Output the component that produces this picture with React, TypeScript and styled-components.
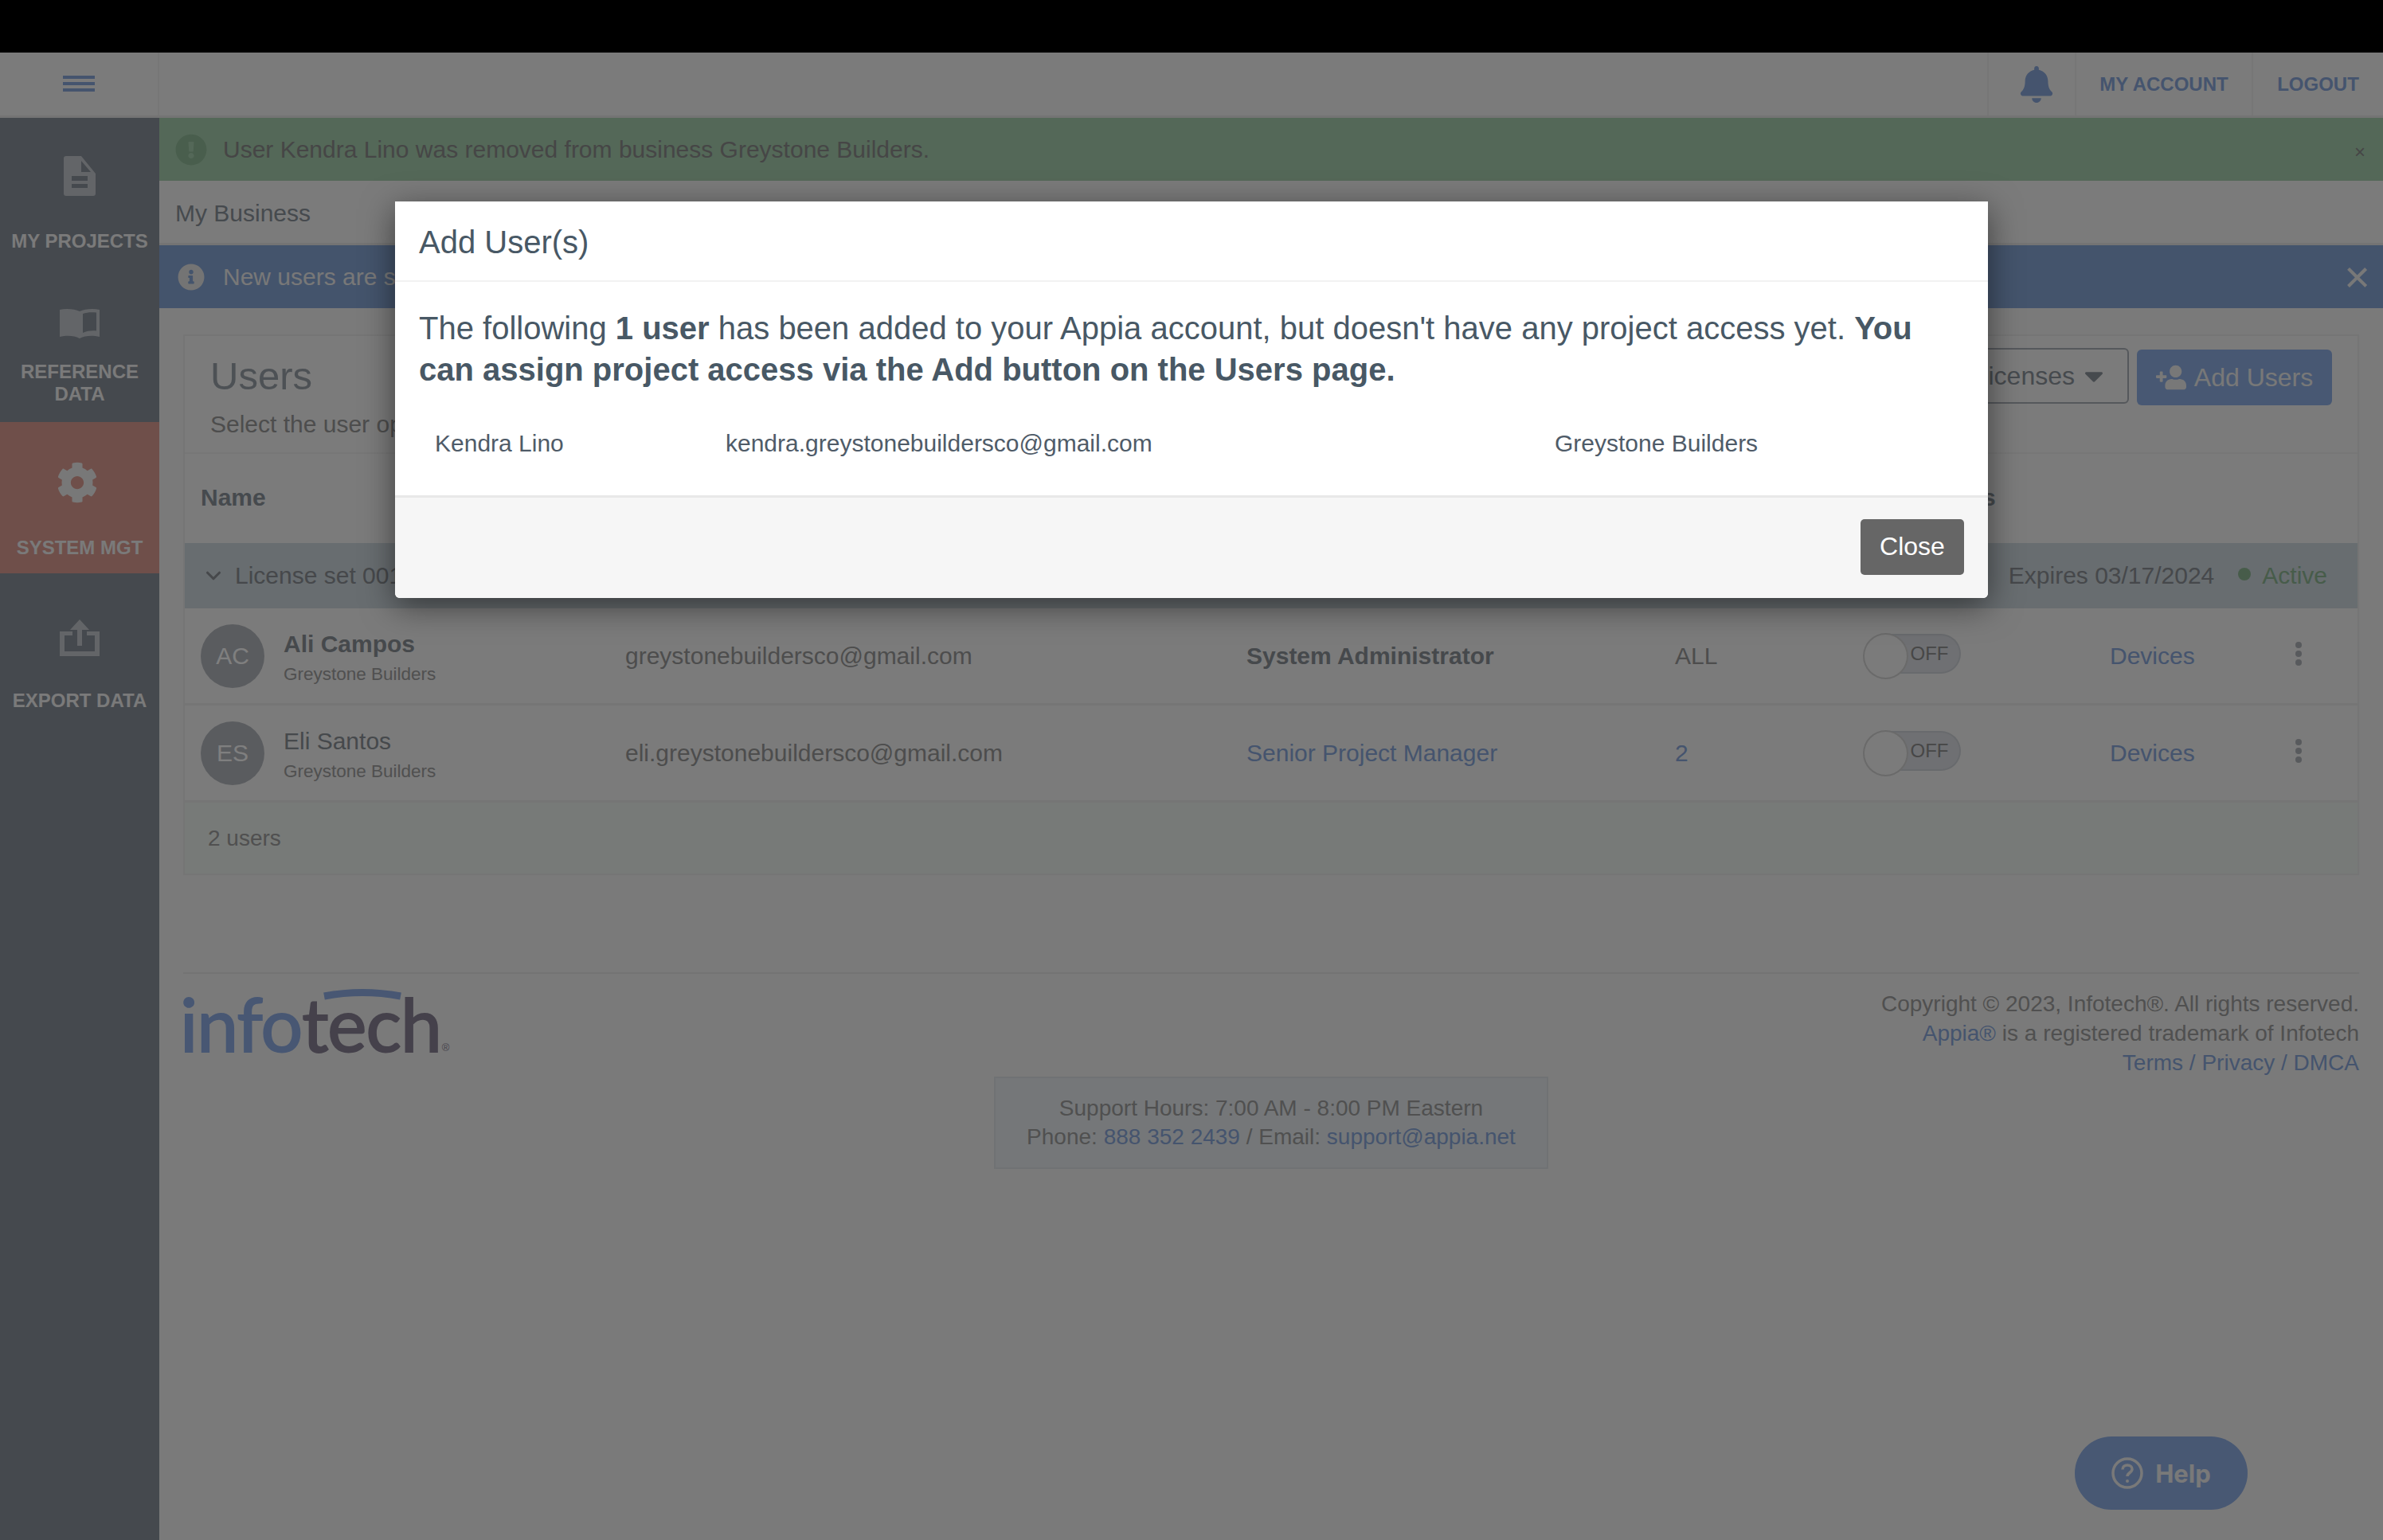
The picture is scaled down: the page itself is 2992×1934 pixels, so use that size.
import React from "react"
import styled, { createGlobalStyle } from "styled-components"
import { FaBell, FaCaretDown, FaCog, FaExclamationCircle, FaInfoCircle, FaUserPlus } from "react-icons/fa"
import { ChevronDown } from "lucide-react"

const GlobalStyle = createGlobalStyle`
	html, body {
		margin: 0;
		padding: 0;
		width: 2992px;
		height: 1934px;
		overflow: hidden;
		background: #f5f5f5;
		font-family: "Liberation Sans", Arial, sans-serif;
	}
	* {
		box-sizing: border-box;
	}
`

const Page = styled.div`
	position: relative;
	width: 2992px;
	height: 1934px;
	display: flex;
	flex-direction: column;
	color: #8c949c;
`

const TopBar = styled.div`
	height: 66px;
	background: #000;
	flex: none;
`

const Header = styled.header`
	height: 82px;
	flex: none;
	display: flex;
	align-items: stretch;
	background: #f6f6f6;
	border-bottom: 3px solid #e8e8e8;
`

const BurgerCell = styled.div`
	width: 200px;
	display: flex;
	align-items: center;
	justify-content: center;
	border-right: 2px solid #ececec;
`

const Burger = styled.div`
	width: 40px;
	height: 20px;
	display: flex;
	flex-direction: column;
	justify-content: space-between;
	margin-top: -2px;

	span {
		height: 4px;
		background: #8aa9dc;
	}
`

const HeaderSpacer = styled.div`
	flex: 1;
`

const HeaderCell = styled.div<{ $width: number; $inset?: number }>`
	width: ${(p) => p.$width}px;
	padding-left: ${(p) => p.$inset ?? 0}px;
	display: flex;
	align-items: center;
	justify-content: center;
	border-left: 2px solid #ececec;
	color: #8aa9dc;
	font-size: 24px;
	font-weight: 700;
`

const Main = styled.div`
	flex: 1;
	display: flex;
	min-height: 0;
`

const Sidebar = styled.nav`
	width: 200px;
	flex: none;
	background: #8b929c;
	display: flex;
	flex-direction: column;
`

const SideItem = styled.div<{ $active?: boolean; $top: number; $gap: number }>`
	height: ${(p) => (p.$active ? 190 : 191)}px;
	padding-top: ${(p) => p.$top}px;
	display: flex;
	flex-direction: column;
	align-items: center;
	background: ${(p) => (p.$active ? "#de9f94" : "transparent")};
	color: #f4f4f4;
	font-size: 24px;
	font-weight: 700;
	line-height: 28px;
	text-align: center;

	svg {
		display: block;
		margin-bottom: ${(p) => p.$gap}px;
	}
`

const Content = styled.main`
	flex: 1;
	min-width: 0;
	display: flex;
	flex-direction: column;
`

const Banner = styled.div<{ $bg: string; $fg: string }>`
	height: 79px;
	flex: none;
	display: flex;
	align-items: center;
	background: ${(p) => p.$bg};
	color: ${(p) => p.$fg};
	font-size: 30px;
`

const BannerIcon = styled.div<{ $color: string; $size: number; $inset: number }>`
	width: 80px;
	padding-left: ${(p) => p.$inset}px;
	display: flex;
	flex: none;
	color: ${(p) => p.$color};
	font-size: ${(p) => p.$size}px;
`

const BannerText = styled.div`
	flex: 1;
`

const BannerClose = styled.div<{ $size: number; $right: number; $top?: number }>`
	font-size: ${(p) => p.$size}px;
	margin-right: ${(p) => p.$right}px;
	margin-top: ${(p) => p.$top ?? 0}px;
	line-height: 1;
`

const Crumb = styled.div`
	height: 81px;
	flex: none;
	padding: 3px 0 0 20px;
	display: flex;
	align-items: center;
	font-size: 30px;
	background: #f6f6f6;
	border-bottom: 3px solid #e8e8e8;
`

const Card = styled.section`
	margin: 33px 30px 0 30px;
	flex: none;
	border: 2px solid #eaeaea;
	background: #f6f6f6;
`

const CardHead = styled.div`
	height: 148px;
	padding: 24px 32px 0 32px;
	display: flex;
	justify-content: space-between;
	border-bottom: 2px solid #eeeeee;
`

const Title = styled.h2`
	margin: 0 0 18px;
	font-size: 49px;
	line-height: 52px;
	font-weight: 400;
	color: #9aa2aa;
`

const Hint = styled.div`
	width: 270px;
	overflow: hidden;
	white-space: nowrap;
	font-size: 30px;
	color: #9a9a9a;
`

const CardActions = styled.div`
	display: flex;
	gap: 10px;
	align-items: flex-start;
	margin-top: -7px;
`

const OutlineButton = styled.div`
	height: 70px;
	padding: 0 23px 0 30px;
	display: flex;
	align-items: center;
	gap: 5px;
	border: 2px solid #aab0b8;
	border-radius: 6px;
	font-size: 32px;
	margin-top: -2px;
`

const PrimaryButton = styled.div`
	width: 245px;
	height: 70px;
	display: flex;
	align-items: center;
	justify-content: center;
	gap: 10px;
	background: #90b0e6;
	border-radius: 6px;
	color: #f0f0f0;
	font-size: 32px;

	svg {
		transform: scaleX(-1);
	}
`

const Columns = styled.div`
	display: grid;
	grid-template-columns: 533px 780px 538px 238px 308px 237px 1fr;
	padding-left: 20px;
	align-items: center;
`

const HeadRow = styled(Columns)`
	height: 112px;
	font-size: 30px;
	font-weight: 700;
	color: #8c949c;
	padding-bottom: 2px;
`

const NudgedHead = styled.div`
	margin-left: -17px;
	white-space: nowrap;
`

const LicenseRow = styled.div`
	height: 82px;
	display: flex;
	align-items: center;
	padding: 0 38px 0 21px;
	background: #d0dae0;
	font-size: 30px;
	color: #8c9196;
`

const LicenseName = styled.div`
	flex: 1;
	display: flex;
	align-items: center;
	gap: 12px;
`

const Expires = styled.div`
	margin-right: 30px;
`

const ActiveTag = styled.div`
	display: flex;
	align-items: center;
	gap: 14px;
	color: #8fb894;
`

const Dot = styled.span`
	width: 16px;
	height: 16px;
	border-radius: 50%;
	background: #8fb894;
	margin-top: -4px;
`

const UserRow = styled(Columns)`
	height: 122px;
	border-bottom: 3px solid #eaeaea;
	font-size: 30px;
	color: #9a9a9a;
`

const NameCell = styled.div`
	display: flex;
	align-items: center;
	gap: 24px;
`

const Avatar = styled.div`
	width: 80px;
	height: 80px;
	border-radius: 50%;
	background: #b4b8be;
	color: #fff;
	display: flex;
	align-items: center;
	justify-content: center;
	font-size: 30px;
`

const UserInfo = styled.div`
	padding-top: 7px;
`

const UserName = styled.div<{ $bold?: boolean }>`
	font-size: 30px;
	line-height: 36px;
	font-weight: ${(p) => (p.$bold ? 700 : 400)};
	color: #8c9298;
`

const UserBiz = styled.div`
	font-size: 22.5px;
	line-height: 34px;
	margin-top: 3px;
	color: #a0a0a0;
`

const Role = styled.div<{ $link?: boolean }>`
	font-weight: ${(p) => (p.$link ? 400 : 700)};
	color: ${(p) => (p.$link ? "#8aa9dc" : "#8c9298")};
`

const LinkText = styled.div`
	color: #8aa9dc;
`

const Toggle = styled.div`
	position: relative;
	width: 91px;
	height: 50px;
	margin-left: 30px;
	margin-top: -6px;
	padding-left: 14px;
	display: flex;
	align-items: center;
	justify-content: center;
	border: 2px solid #d0d4da;
	border-left: none;
	border-radius: 0 25px 25px 0;
	background: #dfe1e6;
	font-size: 24px;
	color: #8e8e8e;

	&::before {
		content: "";
		position: absolute;
		left: -32px;
		top: -3px;
		width: 53px;
		height: 54px;
		border-radius: 50%;
		background: #f6f6f6;
		border: 2px solid #d4d4d4;
	}
`

const Kebab = styled.div`
	display: flex;
	flex-direction: column;
	gap: 3px;
	margin-left: -4px;
	margin-top: -5px;

	span {
		width: 8px;
		height: 8px;
		border-radius: 50%;
		background: #b0b4ba;
	}
`

const CardFoot = styled.div`
	height: 89px;
	padding-left: 29px;
	display: flex;
	align-items: center;
	font-size: 28px;
	color: #a0a0a0;
	background: #eef4f0;
`

const Footer = styled.footer`
	margin: 122px 30px 0 30px;
	border-top: 2px solid #e6e6e6;
	padding-top: 21px;
`

const FooterTop = styled.div`
	display: flex;
	justify-content: space-between;
	align-items: flex-start;
`

const Logo = styled.div`
	position: relative;
	margin-left: -4px;
	font-family: Lato, sans-serif;
	font-size: 93px;
	line-height: 82px;
	letter-spacing: -1px;
	font-weight: 400;
	-webkit-text-stroke: 2px currentColor;
	color: #90afe6;
	display: flex;

	span {
		color: #8a8396;
	}

	sup {
		font-family: "Liberation Sans", sans-serif;
		font-size: 13px;
		line-height: 13px;
		align-self: flex-end;
		margin: 0 0 4px 1px;
		letter-spacing: 0;
		-webkit-text-stroke: 0;
		color: #8a8396;
	}

	svg {
		position: absolute;
		left: 179px;
		top: -3px;
	}
`

const Legal = styled.div`
	margin-top: -2px;
	text-align: right;
	font-size: 28px;
	line-height: 37px;
	color: #a0a0a0;
`

const Support = styled.div`
	width: 696px;
	height: 116px;
	margin: -1px auto 0;
	padding-top: 20px;
	text-align: center;
	background: #eaeff2;
	border: 2px solid #e0e4e8;
	font-size: 28px;
	line-height: 36px;
	color: #a0a0a0;

	a {
		color: #8aa9dc;
	}
`

const FooterLink = styled.a`
	color: #8aa9dc;
`

const HelpButton = styled.div`
	position: absolute;
	left: 2605px;
	top: 1804px;
	width: 217px;
	height: 92px;
	border-radius: 46px;
	background: #90b0e6;
	display: flex;
	align-items: center;
	justify-content: center;
	gap: 15px;
	color: #f2f2f2;
	font-family: Inter, sans-serif;
	font-weight: 700;
	font-size: 31px;
`

const Overlay = styled.div`
	position: absolute;
	inset: 0;
	background: rgba(0, 0, 0, 0.5);
`

const Modal = styled.div`
	position: absolute;
	left: 496px;
	top: 253px;
	width: 2000px;
	height: 498px;
	background: #fff;
	border-radius: 0 0 6px 6px;
	box-shadow: 0 10px 40px rgba(0, 0, 0, 0.5);
	display: flex;
	flex-direction: column;
	color: #485865;
`

const ModalHead = styled.div`
	height: 101px;
	padding: 3px 0 0 30px;
	display: flex;
	align-items: center;
	border-bottom: 2px solid #f2f2f2;
	font-size: 40px;
	flex: none;
`

const ModalBody = styled.div`
	flex: 1;
	padding: 32px 30px 0;
	font-size: 40px;
	line-height: 52px;
	white-space: nowrap;
`

const AddedRow = styled.div`
	display: grid;
	grid-template-columns: 365px 1041px 1fr;
	margin-top: 49px;
	padding-left: 20px;
	font-size: 30px;
	line-height: 36px;
	color: #4f5b68;
`

const ModalFoot = styled.div`
	height: 129px;
	flex: none;
	display: flex;
	align-items: center;
	justify-content: flex-end;
	padding-right: 30px;
	background: #f6f6f6;
	border-top: 3px solid #e8e8e8;
	border-radius: 0 0 6px 6px;
`

const CloseButton = styled.div`
	width: 130px;
	height: 70px;
	display: flex;
	align-items: center;
	justify-content: center;
	background: #666;
	border-radius: 5px;
	color: #fff;
	font-size: 32px;
	margin-top: -3px;
`

const DocIcon = () => (
	<svg width="40" height="50" viewBox="0 0 40 50" fill="#c6cbd0" fillRule="evenodd">
		<path d="M3 0h19l18 22v25a3 3 0 0 1-3 3H3a3 3 0 0 1-3-3V3a3 3 0 0 1 3-3zM22 6v14h12zM10 25v6h20v-6zM10 35v5h20v-5z" />
	</svg>
)

const BookIcon = () => (
	<svg width="50" height="38" viewBox="0 0 50 38" fill="#c6cbd0" fillRule="evenodd">
		<path d="M25 4C19 1 8 0 0 2v34c8-2 18-2 25 2z" />
		<path d="M25 4c6-3 17-4 25-2v34c-8-2-18-2-25 2zM29 7v24c5-2.500 12-3 17-2.500V5.500C40 5 34 5 29 7z" />
	</svg>
)

const ExportIcon = () => (
	<svg width="50" height="46" viewBox="0 0 50 46" fill="#c6cbd0">
		<path d="M25 0l12 13h-9v20h-6V13h-9z" />
		<path d="M0 15h16v5H6v20h38V20H34v-5h16v31H0z" />
	</svg>
)

const HelpIcon = () => (
	<svg width="40" height="40" viewBox="0 0 40 40" fill="none" stroke="#f2f2f2">
		<circle cx="20" cy="20" r="18" strokeWidth="3.500" />
		<path d="M14 15.500c0-3.500 2.700-5.500 6-5.500s6 2 6 5c0 4.500-6 4.500-6 9" strokeWidth="3.500" />
		<circle cx="20" cy="30" r="2" fill="#f2f2f2" stroke="none" />
	</svg>
)

const users = [
	{ initials: "AC", name: "Ali Campos", email: "greystonebuildersco@gmail.com", role: "System Administrator", projects: "ALL", admin: true },
	{ initials: "ES", name: "Eli Santos", email: "eli.greystonebuildersco@gmail.com", role: "Senior Project Manager", projects: "2", admin: false },
]

const App: React.FC = () => (
	<Page>
		<GlobalStyle />
		<TopBar />
		<Header>
			<BurgerCell>
				<Burger>
					<span />
					<span />
					<span />
				</Burger>
			</BurgerCell>
			<HeaderSpacer />
			<HeaderCell $width={110} $inset={12}>
				<FaBell size={46} />
			</HeaderCell>
			<HeaderCell $width={222}>MY ACCOUNT</HeaderCell>
			<HeaderCell $width={165}>LOGOUT</HeaderCell>
		</Header>
		<Main>
			<Sidebar>
				<SideItem $top={48} $gap={43}>
					<DocIcon />
					MY PROJECTS
				</SideItem>
				<SideItem $top={48} $gap={28}>
					<BookIcon />
					REFERENCE
					<br />
					DATA
				</SideItem>
				<SideItem $active $top={50} $gap={42}>
					<FaCog size={52} color="#f0f0f0" style={{ marginLeft: -6 }} />
					SYSTEM MGT
				</SideItem>
				<SideItem $top={58} $gap={42}>
					<ExportIcon />
					EXPORT DATA
				</SideItem>
			</Sidebar>
			<Content>
				<Banner $bg="#a8d0b0" $fg="#8c8c8c">
					<BannerIcon $color="#93bc9a" $size={40} $inset={20}>
						<FaExclamationCircle />
					</BannerIcon>
					<BannerText>User Kendra Lino was removed from business Greystone Builders.</BannerText>
					<BannerClose $size={24} $right={22} $top={6}>×</BannerClose>
				</Banner>
				<Crumb>My Business</Crumb>
				<Banner $bg="#88a8d8" $fg="#f0f0f0">
					<BannerIcon $color="#e8e8e8" $size={34} $inset={23}>
						<FaInfoCircle />
					</BannerIcon>
					<BannerText>New users are shown below once they have accepted their invitation.</BannerText>
					<BannerClose $size={56} $right={16}>×</BannerClose>
				</Banner>
				<Card>
					<CardHead>
						<div>
							<Title>Users</Title>
							<Hint>Select the user options</Hint>
						</div>
						<CardActions>
							<OutlineButton>
								Manage licenses <FaCaretDown size={38} />
							</OutlineButton>
							<PrimaryButton>
								<FaUserPlus size={38} />
								Add Users
							</PrimaryButton>
						</CardActions>
					</CardHead>
					<HeadRow>
						<div>Name</div>
						<div>Email</div>
						<div>Role</div>
						<div>Projects</div>
						<NudgedHead>Notifications</NudgedHead>
						<div />
						<div />
					</HeadRow>
					<LicenseRow>
						<LicenseName>
							<ChevronDown size={30} strokeWidth={2.5} />
							License set 001
						</LicenseName>
						<Expires>Expires 03/17/2024</Expires>
						<ActiveTag>
							<Dot />
							Active
						</ActiveTag>
					</LicenseRow>
					{users.map((u) => (
						<UserRow key={u.initials}>
							<NameCell>
								<Avatar>{u.initials}</Avatar>
								<UserInfo>
									<UserName $bold={u.admin}>{u.name}</UserName>
									<UserBiz>Greystone Builders</UserBiz>
								</UserInfo>
							</NameCell>
							<div>{u.email}</div>
							<Role $link={!u.admin}>{u.role}</Role>
							{u.admin ? <div>{u.projects}</div> : <LinkText>{u.projects}</LinkText>}
							<Toggle>OFF</Toggle>
							<LinkText>Devices</LinkText>
							<Kebab>
								<span />
								<span />
								<span />
							</Kebab>
						</UserRow>
					))}
					<CardFoot>2 users</CardFoot>
				</Card>
				<Footer>
					<FooterTop>
						<Logo>
							info<span>tech</span>
							<sup>®</sup>
							<svg width="100" height="16" viewBox="0 0 100 16" fill="none">
								<path d="M2 10Q50 1 98 10" stroke="#90afe6" strokeWidth="9" />
							</svg>
						</Logo>
						<Legal>
							Copyright © 2023, Infotech®. All rights reserved.
							<br />
							<FooterLink>Appia®</FooterLink> is a registered trademark of Infotech
							<br />
							<FooterLink>Terms / Privacy / DMCA</FooterLink>
						</Legal>
					</FooterTop>
					<Support>
						Support Hours: 7:00 AM - 8:00 PM Eastern
						<br />
						Phone: <a>888 352 2439</a> / Email: <a>support@appia.net</a>
					</Support>
				</Footer>
			</Content>
		</Main>
		<HelpButton>
			<HelpIcon />
			Help
		</HelpButton>
		<Overlay />
		<Modal>
			<ModalHead>Add User(s)</ModalHead>
			<ModalBody>
				<div>
					The following <b>1 user</b> has been added to your Appia account, but doesn't have any project access yet. <b>You</b>
				</div>
				<div>
					<b>can assign project access via the Add button on the Users page.</b>
				</div>
				<AddedRow>
					<div>Kendra Lino</div>
					<div>kendra.greystonebuildersco@gmail.com</div>
					<div>Greystone Builders</div>
				</AddedRow>
			</ModalBody>
			<ModalFoot>
				<CloseButton>Close</CloseButton>
			</ModalFoot>
		</Modal>
	</Page>
)

export default App
